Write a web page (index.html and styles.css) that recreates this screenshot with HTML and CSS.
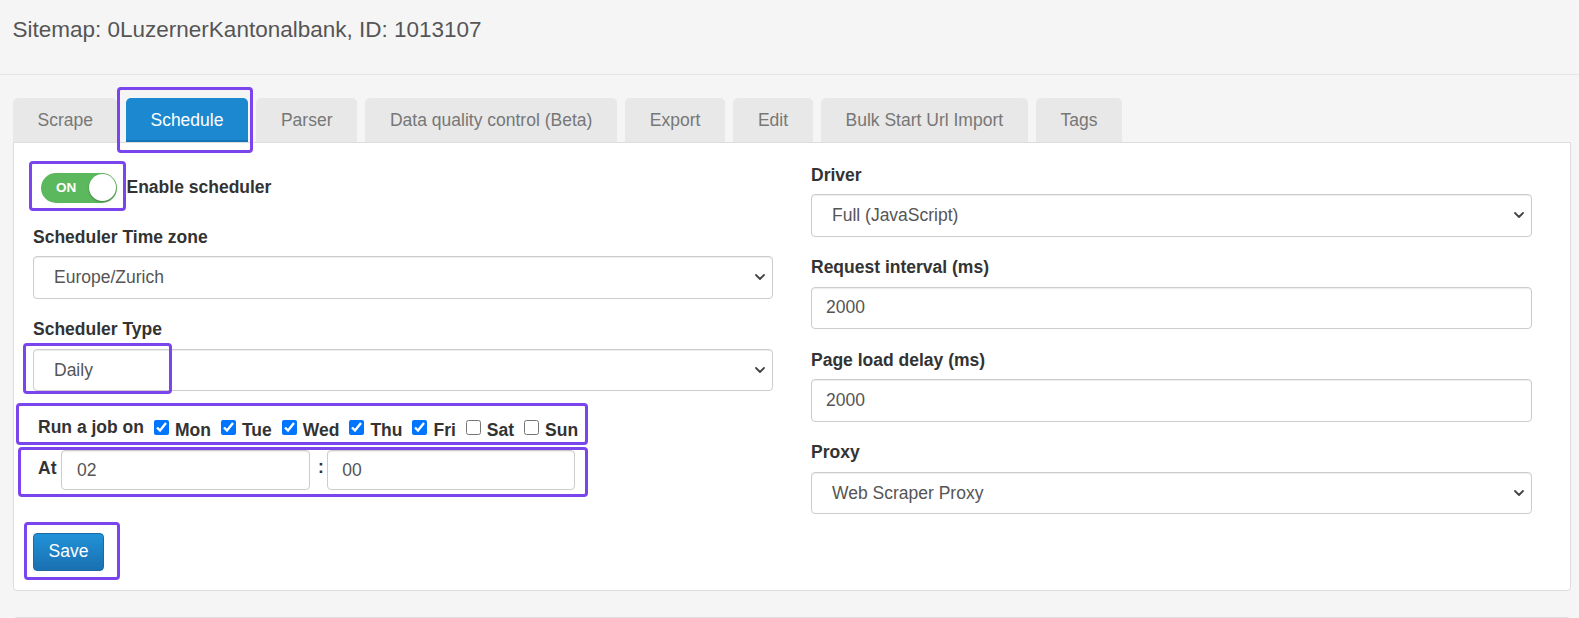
FILE: index.html
```html
<!DOCTYPE html>
<html lang="en">
<head>
<meta charset="utf-8">
<title>Sitemap schedule</title>
<link rel="stylesheet" href="styles.css">
</head>
<body>
<header class="page-header">
  <h1 class="title">Sitemap: 0LuzernerKantonalbank, ID: 1013107</h1>
</header>
<main class="content">
  <nav class="tabs">
    <a class="tab">Scrape</a>
    <a class="tab active mark mark-tab">Schedule</a>
    <a class="tab">Parser</a>
    <a class="tab">Data quality control (Beta)</a>
    <a class="tab">Export</a>
    <a class="tab">Edit</a>
    <a class="tab">Bulk Start Url Import</a>
    <a class="tab">Tags</a>
  </nav>
  <section class="panel">
    <form class="col col-left">
      <div class="switch-row">
        <div class="switch mark mark-switch"><span class="switch-text">ON</span><span class="knob"></span></div>
        <span class="switch-label">Enable scheduler</span>
      </div>
      <div class="group group-first">
        <label class="label">Scheduler Time zone</label>
        <div class="select-wrap">
          <select class="control select"><option>Europe/Zurich</option></select>
          <svg class="chev" viewBox="0 0 10 6"><path d="M1 1 L5 5 L9 1" fill="none" stroke="#444" stroke-width="1.8" stroke-linecap="round" stroke-linejoin="round"/></svg>
        </div>
      </div>
      <div class="group">
        <label class="label">Scheduler Type</label>
        <div class="select-wrap mark mark-daily">
          <select class="control select"><option>Daily</option></select>
          <svg class="chev" viewBox="0 0 10 6"><path d="M1 1 L5 5 L9 1" fill="none" stroke="#444" stroke-width="1.8" stroke-linecap="round" stroke-linejoin="round"/></svg>
        </div>
      </div>
      <div class="run-row mark mark-run">
        <span class="run-label">Run a job on</span>
        <label class="day"><input type="checkbox" checked><span>Mon</span></label>
        <label class="day"><input type="checkbox" checked><span>Tue</span></label>
        <label class="day"><input type="checkbox" checked><span>Wed</span></label>
        <label class="day"><input type="checkbox" checked><span>Thu</span></label>
        <label class="day"><input type="checkbox" checked><span>Fri</span></label>
        <label class="day"><input type="checkbox"><span>Sat</span></label>
        <label class="day"><input type="checkbox"><span>Sun</span></label>
      </div>
      <div class="at-row mark mark-at">
        <span class="at-label">At</span>
        <input class="control time time-h" type="text" value="02">
        <span class="colon">:</span>
        <input class="control time time-m" type="text" value="00">
      </div>
      <button type="button" class="btn-save mark mark-save">Save</button>
    </form>
    <form class="col col-right">
      <div class="group">
        <label class="label">Driver</label>
        <div class="select-wrap">
          <select class="control select"><option>Full (JavaScript)</option></select>
          <svg class="chev" viewBox="0 0 10 6"><path d="M1 1 L5 5 L9 1" fill="none" stroke="#444" stroke-width="1.8" stroke-linecap="round" stroke-linejoin="round"/></svg>
        </div>
      </div>
      <div class="group">
        <label class="label">Request interval (ms)</label>
        <input class="control" type="text" value="2000">
      </div>
      <div class="group">
        <label class="label">Page load delay (ms)</label>
        <input class="control" type="text" value="2000">
      </div>
      <div class="group">
        <label class="label">Proxy</label>
        <div class="select-wrap">
          <select class="control select"><option>Web Scraper Proxy</option></select>
          <svg class="chev" viewBox="0 0 10 6"><path d="M1 1 L5 5 L9 1" fill="none" stroke="#444" stroke-width="1.8" stroke-linecap="round" stroke-linejoin="round"/></svg>
        </div>
      </div>
    </form>
  </section>
  <div class="below"></div>
</main>
</body>
</html>
```
FILE: styles.css
```css
* { box-sizing: border-box; }
html, body { margin: 0; padding: 0; overflow: hidden; }
body {
  width: 1579px;
  height: 618px;
  background: #f5f5f5;
  font-family: "Liberation Sans", Arial, sans-serif;
  font-size: 17.5px;
  line-height: 25px;
  color: #333;
}
.page-header {
  height: 75px;
  padding: 17px 0 0 12.5px;
  border-bottom: 1px solid #e5e5e5;
}
.title {
  margin: 0;
  font-size: 22.5px;
  line-height: 26px;
  font-weight: normal;
  color: #555;
}
.content { padding: 23px 8px 0 13px; }
.tabs { display: flex; gap: 8.5px; height: 44px; }
.tab {
  position: relative;
  display: flex;
  align-items: center;
  padding: 0 24.5px;
  background: #e8e8e8;
  color: #777;
  border-radius: 5px 5px 0 0;
  text-decoration: none;
  white-space: nowrap;
}
.tab.active {
  background: #1b88cf;
  color: #fff;
  box-shadow: inset 0 -2px 0 #1774b6;
}
.panel {
  background: #fff;
  border: 1px solid #ddd;
  border-radius: 0 0 4px 4px;
  padding: 19.5px 38px 19px 19px;
  display: grid;
  grid-template-columns: 740px 1fr;
  column-gap: 38px;
  align-items: start;
}
.col { display: flex; flex-direction: column; margin: 0; }
.switch-row {
  display: flex;
  align-items: center;
  height: 30px;
  margin-top: 10px;
  padding-left: 8px;
  gap: 9.5px;
}
.switch {
  position: relative;
  width: 76px;
  height: 30px;
  border-radius: 15px;
  background: #5cb85c;
  display: flex;
  align-items: center;
  padding-left: 15px;
}
.switch-text { color: #fff; font-weight: bold; font-size: 13.5px; line-height: 1; }
.knob {
  margin-left: auto;
  margin-right: 1.5px;
  width: 27px;
  height: 27px;
  border-radius: 50%;
  background: #fff;
  box-shadow: 0 1px 2px rgba(0,0,0,0.3);
}
.switch-label { font-weight: bold; }
.label { display: block; font-weight: bold; margin-bottom: 6.5px; }
.group + .group { margin-top: 18.5px; }
.group-first { margin-top: 22px; }
.control {
  display: block;
  width: 100%;
  height: 42.5px;
  margin: 0;
  padding: 0 14px;
  border: 1px solid #ccc;
  border-radius: 4px;
  background: #fff;
  box-shadow: inset 0 1px 1px rgba(0,0,0,0.075);
  font-family: inherit;
  font-size: 17.5px;
  color: #555;
}
.select { appearance: none; -webkit-appearance: none; padding-left: 20px; }
.select-wrap { position: relative; }
.chev {
  position: absolute;
  right: 8.5px;
  top: 50%;
  margin-top: -3px;
  width: 10px;
  height: 6px;
  pointer-events: none;
}
.run-row {
  position: relative;
  display: flex;
  align-items: center;
  height: 25px;
  margin-top: 24px;
  padding-left: 5px;
  gap: 10px;
  font-weight: bold;
}
.day { display: flex; align-items: center; gap: 6px; }
.day input { width: 15px; height: 15px; margin: 0; }
.day span { padding-top: 6px; }
.at-row {
  position: relative;
  display: flex;
  align-items: flex-start;
  height: 40px;
  margin-top: 10px;
  padding-left: 5px;
}
.at-label { font-weight: bold; padding-top: 5.5px; margin-right: 5px; }
.time { height: 40px; padding-left: 14.5px; }
.time-h { width: 249px; }
.time-m { width: 248px; }
.colon { font-weight: bold; padding-top: 5px; margin: 0 3px 0 7.5px; }
.btn-save {
  position: relative;
  align-self: flex-start;
  margin-top: 43px;
  width: 71px;
  height: 37.5px;
  padding: 0;
  border: 1px solid #1a6aa8;
  border-radius: 4px;
  background: linear-gradient(#2192d8, #1a70b0);
  color: #fff;
  font-family: inherit;
  font-size: 17.5px;
}
.below {
  margin-top: 26px;
  height: 40px;
  background: #fff;
  border: 1px solid #ddd;
  border-radius: 4px;
}
.mark { position: relative; }
.mark::after {
  content: "";
  position: absolute;
  border: 3.5px solid #7b45ee;
  border-radius: 4px;
  pointer-events: none;
  z-index: 5;
}
.mark-tab::after { top: -11px; left: -8.5px; right: -5px; bottom: -11px; }
.mark-switch::after { top: -11.5px; left: -12.5px; right: -8.5px; bottom: -8px; }
.mark-daily::after { top: -6px; left: -10px; width: 143px; bottom: -3px; }
.mark-run::after { top: -12px; left: -17.5px; width: 566px; bottom: -4.5px; }
.mark-at::after { top: -3px; left: -15.5px; width: 564px; bottom: -7px; }
.mark-save::after { top: -12.5px; left: -10.5px; right: -16.5px; bottom: -10px; }
```
